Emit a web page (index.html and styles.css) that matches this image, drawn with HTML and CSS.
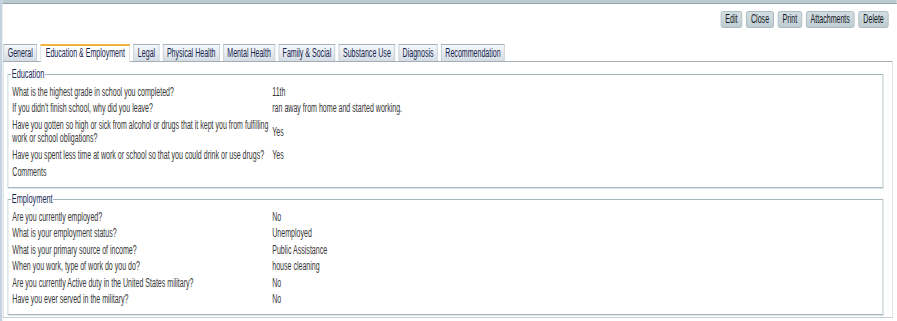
FILE: index.html
```html
<!DOCTYPE html>
<html lang="en">
<head>
  <meta charset="UTF-8">
  <title>Assessment</title>
  <link rel="stylesheet" href="styles.css">
</head>
<body>

  <div class="frame">
    <div class="page">
      <div class="topbar"></div>

      <div class="actions">
        <button class="btn">Edit</button>
        <button class="btn">Close</button>
        <button class="btn">Print</button>
        <button class="btn">Attachments</button>
        <button class="btn">Delete</button>
      </div>

      <ul class="tabs">
        <li class="tab">General</li>
        <li class="tab active">Education &amp; Employment</li>
        <li class="tab">Legal</li>
        <li class="tab">Physical Health</li>
        <li class="tab">Mental Health</li>
        <li class="tab">Family &amp; Social</li>
        <li class="tab">Substance Use</li>
        <li class="tab">Diagnosis</li>
        <li class="tab">Recommendation</li>
      </ul>

      <div class="panel">
        <fieldset class="group">
          <legend>Education</legend>
          <dl class="qa">
            <dt>What is the highest grade in school you completed?</dt><dd>11th</dd>
            <dt>If you didn't finish school, why did you leave?</dt><dd>ran away from home and started working.</dd>
            <dt class="long">Have you gotten so high or sick from alcohol or drugs that it kept you from fulfilling work or school obligations?</dt><dd class="long">Yes</dd>
            <dt>Have you spent less time at work or school so that you could drink or use drugs?</dt><dd>Yes</dd>
            <dt>Comments</dt><dd></dd>
          </dl>
        </fieldset>

        <fieldset class="group">
          <legend>Employment</legend>
          <dl class="qa">
            <dt>Are you currently employed?</dt><dd>No</dd>
            <dt>What is your employment status?</dt><dd>Unemployed</dd>
            <dt>What is your primary source of income?</dt><dd>Public Assistance</dd>
            <dt>When you work, type of work do you do?</dt><dd>house cleaning</dd>
            <dt>Are you currently Active duty in the United States military?</dt><dd>No</dd>
            <dt>Have you ever served in the military?</dt><dd>No</dd>
          </dl>
        </fieldset>
      </div>
    </div>
  </div>

</body>
</html>
```

FILE: styles.css
```css
html, body {
  margin: 0;
  background: #fff;
}

.frame {
  width: 897px;
  height: 321px;
  overflow: hidden;
}

/* the whole form is drawn wide and squeezed to fit the frame */
.page {
  width: 1525px;
  height: 321px;
  box-sizing: border-box;
  border-left: 4px solid #c6d3df;
  transform: scaleX(0.588);
  transform-origin: 0 0;
  font-family: "Liberation Sans", Arial, sans-serif;
  font-size: 12px;
  color: #363636;
}

.topbar {
  height: 3px;
  background: #bccbcf;
  border-bottom: 1px solid #8fa3a9;
}

.actions {
  display: flex;
  justify-content: flex-end;
  gap: 7px;
  padding: 7px 14px 0 0;
}

.btn {
  height: 17px;
  padding: 0 7px;
  font-family: "Liberation Sans", Arial, sans-serif;
  font-size: 12px;
  line-height: 15px;
  color: #14181c;
  background: linear-gradient(#d3dee2, #bfcdd2);
  border: 1px solid #98abb1;
  border-radius: 3px;
  cursor: pointer;
}

.tabs {
  display: flex;
  gap: 6px;
  list-style: none;
  margin: 16px 0 0;
  padding: 0 0 0 2px;
}

.tab {
  height: 16px;
  padding: 0 6px;
  line-height: 16px;
  color: #142350;
  background: linear-gradient(#f6f8fa, #d4dde4);
  border: 1px solid #a5b2be;
  border-bottom: none;
  cursor: pointer;
}

.tab.active {
  position: relative;
  z-index: 1;
  padding: 0 8px;
  line-height: 15px;
  margin-bottom: -1px;
  background: #fff;
  border-color: #c3ccd3;
  border-top: 2px solid #f0b23c;
}

.panel {
  height: 257px;
  box-sizing: border-box;
  margin: 0 7px 0 1px;
  padding: 6px 15px 0 7px;
  border: 1px solid #c7cfd3;
  border-top-color: #a4adb4;
}

.group {
  margin: 0 0 5px;
  padding: 2.5px 7px 7px;
  border: 1px solid #a6b8bd;
  box-shadow: 1px 1px 0 #dfe7e9;
}

.group + .group {
  padding-bottom: 6px;
}

.group legend {
  margin-left: -2px;
  padding: 0 1px;
  font-size: 12.5px;
  line-height: 13px;
  color: #1a2a58;
}

.qa {
  display: grid;
  grid-template-columns: 442px 1fr;
  align-items: center;
  margin: 0;
}

.qa dt,
.qa dd {
  margin: 0;
  padding: 2px 0 1.5px;
  line-height: 13px;
}

.qa .long {
  padding: 2.5px 0 2px;
}
```
